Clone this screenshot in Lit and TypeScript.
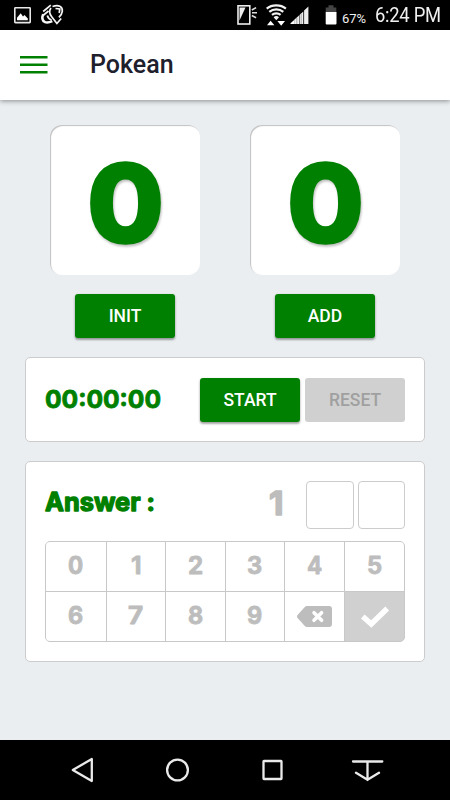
import { LitElement, html, css, svg } from "lit";
import { customElement, property } from "lit/decorators.js";

/** Heavy rounded lettering, fitted to a given advance width. */
@customElement("fit-text")
class FitText extends LitElement {
  @property() text = "";
  @property({ type: Number }) w = 20;
  @property({ type: Number }) h = 24;
  @property({ type: Number }) size = 24;
  @property({ type: Number }) stroke = 0.6;
  static styles = css`
    :host { display: block; line-height: 0; }
    svg { display: block; overflow: visible; }
    text { font-family: Inter, "Noto Sans", sans-serif; font-weight: 700; fill: currentColor; stroke: currentColor; stroke-linejoin: round; }
  `;
  render() {
    return html`<svg width=${this.w} height=${this.h} viewBox="0 0 ${this.w} ${this.h}">
      ${svg`<text x="0" y=${this.h - this.stroke / 2} font-size=${this.size} stroke-width=${this.stroke} textLength=${this.w} lengthAdjust="spacingAndGlyphs">${this.text}</text>`}
    </svg>`;
  }
}

@customElement("status-bar")
class StatusBar extends LitElement {
  static styles = css`
    :host { display: block; height: 30px; background: #000; color: #f0f0f0; }
    .bar { display: flex; height: 30px; align-items: center; font-family: Roboto, sans-serif; }
    svg { display: block; flex: none; }
    .fill { flex: 1; }
    .pct { font-size: 13px; width: 26px; margin: 7px 7px 0 4px; letter-spacing: -0.1px; white-space: nowrap; }
    .time { font-size: 20px; width: 66px; margin-right: 9px; letter-spacing: -0.3px; white-space: nowrap; transform: scaleX(.92); transform-origin: 0 50%; }
  `;
  render() {
    return html`<div class="bar">
      <svg width="70" height="30" viewBox="0 0 70 30">
        <rect x="14.8" y="7.8" width="15.4" height="14.8" rx=".6" fill="none" stroke="#e8e8e8" stroke-width="1.6"/>
        <path d="M17 20.2v-2.500l3.700-4.400 2.300 3.200 1.500-1.600 3.300 3.500v1.800z" fill="#fff"/>
        <g fill="none" stroke="#f5f5f5" stroke-width="1.700">
          <path d="M43.200 11.500L50.800 5.200M52.500 6.500c6-2 10.300-.3 9.800 4.800-.3 2.600-1.600 4.200-3.400 6"/>
          <path d="M51 8c-2.500 3.300-1.900 5.500.7 8.700l5.200 6.800 4.300-5"/>
          <path d="M43.200 14.300c-1.500 3.200-1 6.800 1.800 7.800 2.200.8 4.500.3 7.300-1" stroke-width="2.600"/>
          <path d="M43 15.500l5.500-4.500M47.300 15.500c.6 2.300 2.300 3.800 4.300 4.500M55.500 8.500l4.300.5-.6 4"/>
        </g>
      </svg>
      <span class="fill"></span>
      <svg width="103" height="30" viewBox="235 0 103 30">
        <rect x="238" y="5.800" width="11.800" height="18.200" fill="none" stroke="#eee" stroke-width="1.600"/>
        <path d="M239.500 7.500h6l-6 13z" fill="#eee"/>
        <path d="M251.800 10l4.300-2.400M252 12.800h5M251.800 15.500l4.300 2.300" stroke="#ddd" stroke-width="1.600"/>
        <g fill="none" stroke="#f2f2f2" stroke-width="2.200">
          <path d="M266.700 8.600c5.300-4.300 13.900-4.300 19.200 0M269.300 11.800c4-3.300 10-3.300 14 0M272 14.900c2.400-2 6.200-2 8.600 0"/>
        </g>
        <path d="M273.600 17.200q2.700-2.200 5.400 0l-2.700 3z" fill="#f2f2f2"/>
        <path d="M267 25.300l3.600-4.600 3.800 4.600zM277.400 21.100h7.600l-3.800 4.600z" fill="#fff"/>
        <path d="M290.500 24v-.8l4.200-3.800V24z" fill="#fff"/>
        <path d="M294.500 24v-4.500l4.500-4.100V24zM299.500 24v-9.100l3.800-3.400V24zM304.100 24V10.600l4.300-4.200V24z" fill="#eee"/>
        <path d="M296.800 24v-6M301.200 24V13.700" stroke="#aaa" stroke-width="1"/>
        <path d="M325.700 12V7.400h2.800V5.300h5v2.100h2.800V12z" fill="#444"/>
        <path d="M325.700 12h10.800v11.400q0 1-1 1h-8.800q-1 0-1-1z" fill="#fff"/>
      </svg>
      <span class="pct">67%</span><span class="time">6:24 PM</span>
    </div>`;
  }
}

@customElement("raised-button")
class RaisedButton extends LitElement {
  @property() label = "";
  @property({ type: Boolean }) disabled = false;
  static styles = css`
    :host { display: block; width: 100px; height: 44px; }
    button { display: block; width: 100px; height: 44px; padding: 0; border: 0; border-radius: 3px; background: #008000; color: #fff; font: 500 17.5px/44px Roboto, sans-serif; box-shadow: 0 2px 2px rgba(0,0,0,.25), 0 1px 3px rgba(0,0,0,.2); }
    button:disabled { background: #d0d0d0; color: #a0a0a0; box-shadow: none; }
  `;
  render() {
    return html`<button ?disabled=${this.disabled}>${this.label}</button>`;
  }
}

@customElement("app-root")
class AppRoot extends LitElement {
  static styles = css`
    :host { display: block; width: 450px; height: 800px; }
    * { box-sizing: border-box; }
    .screen { display: flex; flex-direction: column; width: 450px; height: 800px; background: #eaeef1; overflow: hidden; font-family: Roboto, sans-serif; }
    header { display: flex; flex: none; align-items: center; height: 70px; padding: 0 20px; gap: 42px; background: #fff; box-shadow: 0 1px 5px rgba(0,0,0,.42); }
    header svg { display: block; }
    h1 { margin: 0; font-size: 25px; line-height: 30px; font-weight: 500; color: #20202c; }
    main { flex: 1; padding: 25px 25px 0; }
    .pair { display: flex; justify-content: space-between; padding: 0 25px; }
    .counter { display: flex; flex-direction: column; align-items: center; gap: 19px; }
    .tile { display: flex; justify-content: center; width: 150px; height: 150px; padding-top: 35px; border-radius: 12px; background: #fff; box-shadow: inset 1px 1px 1px rgba(0,0,0,.25); color: #008000; }
    .tile fit-text { filter: drop-shadow(1px 2px 1px rgba(0,0,0,.25)); }
    .card { display: flex; width: 400px; background: #fff; border: 1px solid #ccc; border-radius: 5px; padding: 0 19px; }
    .timer { height: 85px; margin-top: 19px; align-items: center; color: #008000; gap: 5px; }
    .clock { flex: 1; margin-top: -2px; }
    .answer { flex-direction: column; height: 201px; margin-top: 19px; padding-top: 19px; color: #008000; }
    .row { display: flex; height: 48px; margin-bottom: 12px; gap: 4px; }
    .row .title { flex: 1; padding-top: 11px; }
    .given { width: 33px; padding-top: 9px; color: #bdbdbd; }
    .slot { width: 47.500px; height: 48px; border: 1px solid #ccc; border-radius: 4px; }
    .pad { display: grid; grid-template-columns: 60px 58px 59px 58px 59px 59px; grid-template-rows: 49px 49px; width: 360px; height: 101px; border: 1px solid #c8c8c8; border-radius: 5px; overflow: hidden; background: #c8c8c8; gap: 1px; }
    .key { display: flex; justify-content: center; padding-top: 14px; background: #fff; color: #bdbdbd; }
    .key.ok { background: #d0d0d0; padding-top: 14px; }
    .key.del { padding-top: 14px; }
    .key svg { display: block; }
    nav { flex: none; height: 60px; background: #000; }
    nav svg { display: block; }
  `;
  render() {
    const key = (d: string) => html`<div class="key"><fit-text text=${d} w=${d === "1" ? 10.5 : 15.2} h="18.5" size="24" stroke=".8"></fit-text></div>`;
    return html`<div class="screen">
      <status-bar></status-bar>
      <header>
        <svg width="28" height="20" viewBox="0 0 28 20"><path d="M0 2.200h27.500M0 9.700h27.500M0 17.200h27.500" stroke="#008000" stroke-width="2.500"/></svg>
        <h1>Pokean</h1>
      </header>
      <main>
        <div class="pair">
          ${["INIT", "ADD"].map((l) => html`<div class="counter">
            <div class="tile"><fit-text text="0" w="75" h="83.500" size="104.500" stroke="5.500"></fit-text></div>
            <raised-button label=${l}></raised-button>
          </div>`)}
        </div>
        <section class="card timer">
          <fit-text class="clock" text="00:00:00" w="116" h="18" size="24.200" stroke=".8"></fit-text>
          <raised-button label="START"></raised-button>
          <raised-button label="RESET" disabled></raised-button>
        </section>
        <section class="card answer">
          <div class="row">
            <fit-text class="title" text="Answer :" w="110" h="19.500" size="25" stroke="1.300"></fit-text>
            <fit-text class="given" text="1" w="14.500" h="25.500" size="33" stroke="1.600"></fit-text>
            <div class="slot"></div><div class="slot"></div>
          </div>
          <div class="pad">
            ${["0", "1", "2", "3", "4", "5", "6", "7", "8", "9"].map(key)}
            <div class="key del"><svg width="35" height="21" viewBox="0 0 35 21"><path d="M10 0H32q3 0 3 3V18q0 3-3 3H10q-1.300 0-2.200-1L.6 12q-1.200-1.500 0-3L7.800 1Q8.700 0 10 0z" fill="#bdbdbd"/><path d="M17 6.700l7.600 7.600M24.600 6.700L17 14.300" stroke="#fff" stroke-width="3.600" stroke-linecap="round"/></svg></div>
            <div class="key ok"><svg width="30" height="22" viewBox="0 0 30 22"><path d="M2.800 10.500l8.500 7.500L27.200 2.500" fill="none" stroke="#fff" stroke-width="5.400"/></svg></div>
          </div>
        </section>
      </main>
      <nav><svg width="450" height="60" viewBox="0 740 450 60" fill="none" stroke="#eaeaea" stroke-width="2.300" stroke-linejoin="round" stroke-linecap="round">
        <path d="M91.800 759v22L72.800 770z"/><circle cx="177.500" cy="770" r="10.400"/><rect x="263.500" y="761" width="18" height="18" rx=".5"/>
        <path d="M353 761.500h29.300M367.500 761.500V780M356 772.800l11.500 7 11.500-7"/>
      </svg></nav>
    </div>`;
  }
}
